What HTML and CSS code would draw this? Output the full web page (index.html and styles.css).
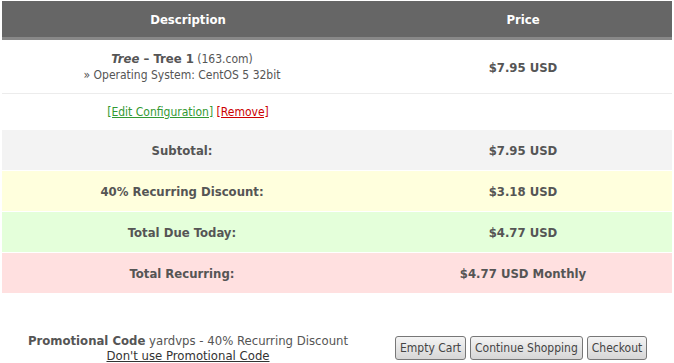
FILE: index.html
```html
<!DOCTYPE html>
<html lang="en">
<head>
  <meta charset="UTF-8" />
  <title>Shopping Cart</title>
  <link rel="stylesheet" href="styles.css">
</head>
<body>

  <!-- cart table -->
  <table class="cart">
    <thead>
      <tr>
        <th class="col-desc">Description</th>
        <th class="col-price">Price</th>
      </tr>
    </thead>
    <tbody>
      <tr class="item">
        <td class="desc">
          <div><strong><em>Tree</em> – Tree 1</strong> (163.com)</div>
          <div class="option">» Operating System: CentOS 5 32bit</div>
        </td>
        <td class="price">$7.95 USD</td>
      </tr>
      <tr class="actions">
        <td>
          <a href="#" class="edit">[Edit Configuration]</a>
          <a href="#" class="remove">[Remove]</a>
        </td>
        <td></td>
      </tr>
      <tr class="total subtotal">
        <td>Subtotal:</td>
        <td>$7.95 USD</td>
      </tr>
      <tr class="total discount">
        <td>40% Recurring Discount:</td>
        <td>$3.18 USD</td>
      </tr>
      <tr class="total due">
        <td>Total Due Today:</td>
        <td>$4.77 USD</td>
      </tr>
      <tr class="total recurring">
        <td>Total Recurring:</td>
        <td>$4.77 USD Monthly</td>
      </tr>
    </tbody>
  </table>

  <!-- promo + buttons -->
  <div class="cart-footer">
    <div class="promo">
      <div><strong>Promotional Code</strong> yardvps - 40% Recurring Discount</div>
      <a href="#">Don't use Promotional Code</a>
    </div>
    <div class="buttons">
      <button class="btn">Empty Cart</button>
      <button class="btn">Continue Shopping</button>
      <button class="btn">Checkout</button>
    </div>
  </div>

</body>
</html>
```

FILE: styles.css
```css
/* base */
html, body {
  margin: 0;
  padding: 0;
  background: #fff;
}

body {
  padding: 1px 2px 0;
  font-family: 'DejaVu Sans Condensed', 'DejaVu Sans', sans-serif;
  font-size: 12px;
  color: #555;
}

/* cart table */
.cart {
  width: 670px;
  border-collapse: collapse;
  text-align: center;
}

.cart th {
  background: #666;
  color: #fff;
  font-size: 13px;
  font-weight: bold;
  height: 36px;
  padding: 0;
  border-bottom: 3px solid #888;
}

.col-desc {
  width: 372px;
}

.cart td {
  padding: 0;
  line-height: 15px;
}

.item td {
  height: 51px;
  border-bottom: 1px solid #ececec;
}

.item .desc {
  padding-right: 12px;
}

.item strong {
  font-size: 13px;
}

.item .option {
  margin-top: 1px;
}

.item .price {
  font-weight: bold;
  font-size: 13px;
  padding-top: 2px;
}

.actions td {
  height: 36px;
}

.actions a {
  text-decoration: underline;
}

.actions .edit {
  color: #339933;
}

.actions .remove {
  color: #cc0000;
}

/* total rows */
.total td {
  height: 40px;
  font-weight: bold;
  font-size: 13px;
  border-bottom: 1px solid #fff;
}

.total td:first-child {
  padding-right: 12px;
}

.subtotal td {
  background: #f3f3f3;
}

.discount td {
  background: #ffffdd;
}

.due td {
  background: #e4ffda;
}

.recurring td {
  background: #ffe0e0;
}

/* footer */
.cart-footer {
  display: flex;
  align-items: center;
  margin-top: 39px;
}

.promo {
  width: 372px;
  text-align: center;
  font-size: 13px;
  line-height: 15px;
}

.promo a {
  color: #333;
  text-decoration: underline;
}

.buttons {
  display: flex;
  gap: 4px;
  margin: 0 0 0 21px;
}

.btn {
  font-family: 'DejaVu Sans Condensed', 'DejaVu Sans', sans-serif;
  font-size: 12px;
  color: #444;
  height: 24px;
  padding: 0 4px;
  border: 1px solid #777;
  border-radius: 3px;
  background: linear-gradient(#f4f4f4, #d6d6d6);
}
```
